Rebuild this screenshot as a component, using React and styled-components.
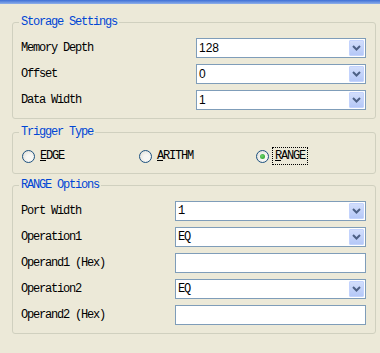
import React from "react";
import styled, { createGlobalStyle } from "styled-components";

const Global = createGlobalStyle`
  html, body { margin: 0; padding: 0; background: #ece9d8; }
  body { width: 380px; height: 353px; overflow: hidden; }
`;

const Page = styled.div`
  width: 380px;
  height: 353px;
  background: #ece9d8;
  display: flex;
  flex-direction: column;
  font-family: "Liberation Mono", "Courier New", monospace;
  font-size: 12px;
  letter-spacing: -1.2px;
  color: #000;
`;

const TopBar = styled.div`
  height: 4px;
  background: linear-gradient(#3d6fd6, #8fb0ea);
`;

const Body = styled.div`
  display: flex;
  flex-direction: column;
  padding: 11px 4px 0 12px;
`;

const Group = styled.fieldset`
  margin: ${(p) => p.$mt || 0}px 0 0 0;
  padding: ${(p) => p.$pt}px 8px ${(p) => p.$pb}px 8px;
  border: 1px solid #d0d0bf;
  border-radius: 3px;
  min-width: 0;
`;

const Legend = styled.legend`
  color: #0046d5;
  padding: 0 2px;
  margin-left: -2px;
  line-height: 14px;
`;

const Rows = styled.div`
  display: flex;
  flex-direction: column;
  gap: 6px;
`;

const Row = styled.div`
  display: flex;
  align-items: center;
  justify-content: space-between;
  height: 20px;
`;

const Label = styled.span`
  line-height: 14px;
`;

const SelectBox = styled.div`
  box-sizing: border-box;
  width: ${(p) => p.$w}px;
  height: 20px;
  border: 1px solid #7f9db9;
  background: #fff;
  display: flex;
  align-items: stretch;
  padding: 1px;
  margin-right: 1px;
`;

const Value = styled.span`
  flex: 1;
  display: flex;
  align-items: center;
  padding-left: 1px;
  font-family: ${(p) =>
    p.$sans ? '"Liberation Sans", Arial, sans-serif' : '"Liberation Mono", "Courier New", monospace'};
  font-size: 12px;
  letter-spacing: ${(p) => (p.$sans ? "0" : "-1.2px")};
`;

const ArrowBtn = styled.span`
  width: 15px;
  box-sizing: border-box;
  border: 1px solid #c3d3fd;
  border-radius: 1px;
  background: linear-gradient(#d2defb, #b5c8f7);
  display: flex;
  align-items: center;
  justify-content: center;
`;

const TextInput = styled.div`
  box-sizing: border-box;
  width: ${(p) => p.$w}px;
  height: 20px;
  border: 1px solid #7f9db9;
  background: #fff;
  margin-right: 1px;
`;

const RadioRow = styled.div`
  display: grid;
  grid-template-columns: 117px 117px 117px;
  height: 20px;
  align-items: center;
  padding-left: 1px;
`;

const RadioItem = styled.label`
  display: flex;
  align-items: center;
  gap: ${(p) => (p.$focus ? 4 : 5)}px;
`;

const Circle = styled.span`
  width: 13px;
  height: 13px;
  box-sizing: border-box;
  border-radius: 50%;
  border: 1px solid #1c5180;
  background: radial-gradient(circle at 60% 60%, #f7f7f4 30%, #dcdad2 100%);
  display: flex;
  align-items: center;
  justify-content: center;
`;

const Dot = styled.span`
  width: 5px;
  height: 5px;
  border-radius: 50%;
  background: radial-gradient(circle at 40% 40%, #6fd36f, #1f9a1f);
`;

const RadioText = styled.span`
  line-height: 14px;
  padding: 1px 2px;
  border: 1px dotted ${(p) => (p.$focus ? "#000" : "transparent")};
  margin-left: ${(p) => (p.$focus ? -1 : -3)}px;
`;

const U = styled.span`
  text-decoration: underline;
`;

function Chevron() {
  return (
    <svg width="9" height="6" viewBox="0 0 9 6">
      <path d="M1 1 L4.5 4.5 L8 1" fill="none" stroke="#4d6185" strokeWidth="2" />
    </svg>
  );
}

function Select({ w, value, sans }) {
  return (
    <SelectBox $w={w}>
      <Value $sans={sans}>{value}</Value>
      <ArrowBtn>
        <Chevron />
      </ArrowBtn>
    </SelectBox>
  );
}

function Radio({ checked, children, focus }) {
  return (
    <RadioItem $focus={focus}>
      <Circle>{checked && <Dot />}</Circle>
      <RadioText $focus={focus}>{children}</RadioText>
    </RadioItem>
  );
}

export default function App() {
  return (
    <>
      <Global />
      <Page>
        <TopBar />
        <Body>
          <Group $pt={9} $pb={8}>
            <Legend>Storage Settings</Legend>
            <Rows>
              <Row>
                <Label>Memory Depth</Label>
                <Select w={170} value="128" sans />
              </Row>
              <Row>
                <Label>Offset</Label>
                <Select w={170} value="0" sans />
              </Row>
              <Row>
                <Label>Data Width</Label>
                <Select w={170} value="1" sans />
              </Row>
            </Rows>
          </Group>
          <Group $mt={6} $pt={7} $pb={7}>
            <Legend>Trigger Type</Legend>
            <RadioRow>
              <Radio>
                <U>E</U>DGE
              </Radio>
              <Radio>
                <U>A</U>RITHM
              </Radio>
              <Radio checked focus>
                <U>R</U>ANGE
              </Radio>
            </RadioRow>
          </Group>
          <Group $mt={4} $pt={9} $pb={8}>
            <Legend>RANGE Options</Legend>
            <Rows>
              <Row>
                <Label>Port Width</Label>
                <Select w={191} value="1" />
              </Row>
              <Row>
                <Label>Operation1</Label>
                <Select w={191} value="EQ" />
              </Row>
              <Row>
                <Label>Operand1 (Hex)</Label>
                <TextInput $w={191} />
              </Row>
              <Row>
                <Label>Operation2</Label>
                <Select w={191} value="EQ" />
              </Row>
              <Row>
                <Label>Operand2 (Hex)</Label>
                <TextInput $w={191} />
              </Row>
            </Rows>
          </Group>
        </Body>
      </Page>
    </>
  );
}
